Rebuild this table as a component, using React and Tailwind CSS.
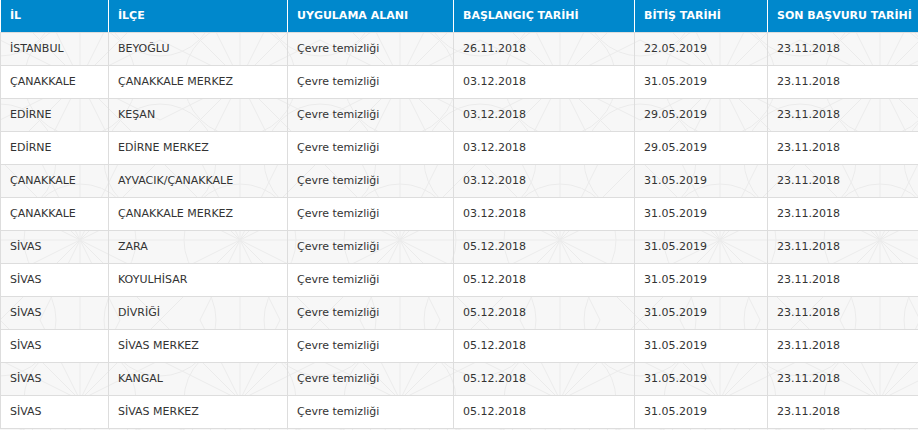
import React from 'react'

const rows = [
  ['İSTANBUL', 'BEYOĞLU', '26.11.2018', '22.05.2019'],
  ['ÇANAKKALE', 'ÇANAKKALE MERKEZ', '03.12.2018', '31.05.2019'],
  ['EDİRNE', 'KEŞAN', '03.12.2018', '29.05.2019'],
  ['EDİRNE', 'EDİRNE MERKEZ', '03.12.2018', '29.05.2019'],
  ['ÇANAKKALE', 'AYVACIK/ÇANAKKALE', '03.12.2018', '31.05.2019'],
  ['ÇANAKKALE', 'ÇANAKKALE MERKEZ', '03.12.2018', '31.05.2019'],
  ['SİVAS', 'ZARA', '05.12.2018', '31.05.2019'],
  ['SİVAS', 'KOYULHİSAR', '05.12.2018', '31.05.2019'],
  ['SİVAS', 'DİVRİĞİ', '05.12.2018', '31.05.2019'],
  ['SİVAS', 'SİVAS MERKEZ', '05.12.2018', '31.05.2019'],
  ['SİVAS', 'KANGAL', '05.12.2018', '31.05.2019'],
  ['SİVAS', 'SİVAS MERKEZ', '05.12.2018', '31.05.2019'],
]

const headers = ['İL', 'İLÇE', 'UYGULAMA ALANI', 'BAŞLANGIÇ TARİHİ', 'BİTİŞ TARİHİ', 'SON BAŞVURU TARİHİ']

const cols = 'grid grid-cols-[108px_179px_166px_181px_133px_1fr]'

// faint geometric background, sits under the striped rows
function Pattern() {
  return (
    <svg className="absolute inset-0 w-full h-full" aria-hidden="true">
      <defs>
        <pattern id="geo" width="160" height="160" patternUnits="userSpaceOnUse">
          <g fill="none" stroke="#ebebeb" strokeWidth="1">
            <path d="M0 0 L160 160 M160 0 L0 160" />
            <path d="M80 0 L80 160 M0 80 L160 80" />
            <path d="M0 40 L160 120 M0 120 L160 40" />
            <path d="M40 0 L120 160 M120 0 L40 160" />
            <circle cx="80" cy="80" r="56" />
            <circle cx="0" cy="0" r="56" />
            <circle cx="160" cy="0" r="56" />
            <circle cx="0" cy="160" r="56" />
            <circle cx="160" cy="160" r="56" />
          </g>
        </pattern>
      </defs>
      <rect width="100%" height="100%" fill="url(#geo)" />
    </svg>
  )
}

export default function App() {
  return (
    <div className="relative w-[918px] h-[430px] overflow-hidden bg-[#f7f7f7] font-['DejaVu_Sans',Verdana,sans-serif] text-[11px] text-[#333]">
      <Pattern />
      <div className="relative">
        {/* Header */}
        <div className={`${cols} bg-[#0088cc] text-white font-bold h-[33px] border-b border-[#dddddd]`}>
          {headers.map((h, i) => (
            <div key={i} className="border-l border-white flex items-center px-[9px] whitespace-nowrap overflow-hidden">
              {h}
            </div>
          ))}
        </div>

        {/* Body */}
        {rows.map((r, i) => {
          const cells = [r[0], r[1], 'Çevre temizliği', r[2], r[3], '23.11.2018']
          return (
            <div
              key={i}
              className={`${cols} h-[33px] border-b border-[#dddddd] ${i % 2 === 1 ? 'bg-white' : ''}`}
            >
              {cells.map((c, j) => (
                <div key={j} className="border-l border-[#dddddd] flex items-center px-[9px] whitespace-nowrap">
                  {c}
                </div>
              ))}
            </div>
          )
        })}
      </div>
    </div>
  )
}
